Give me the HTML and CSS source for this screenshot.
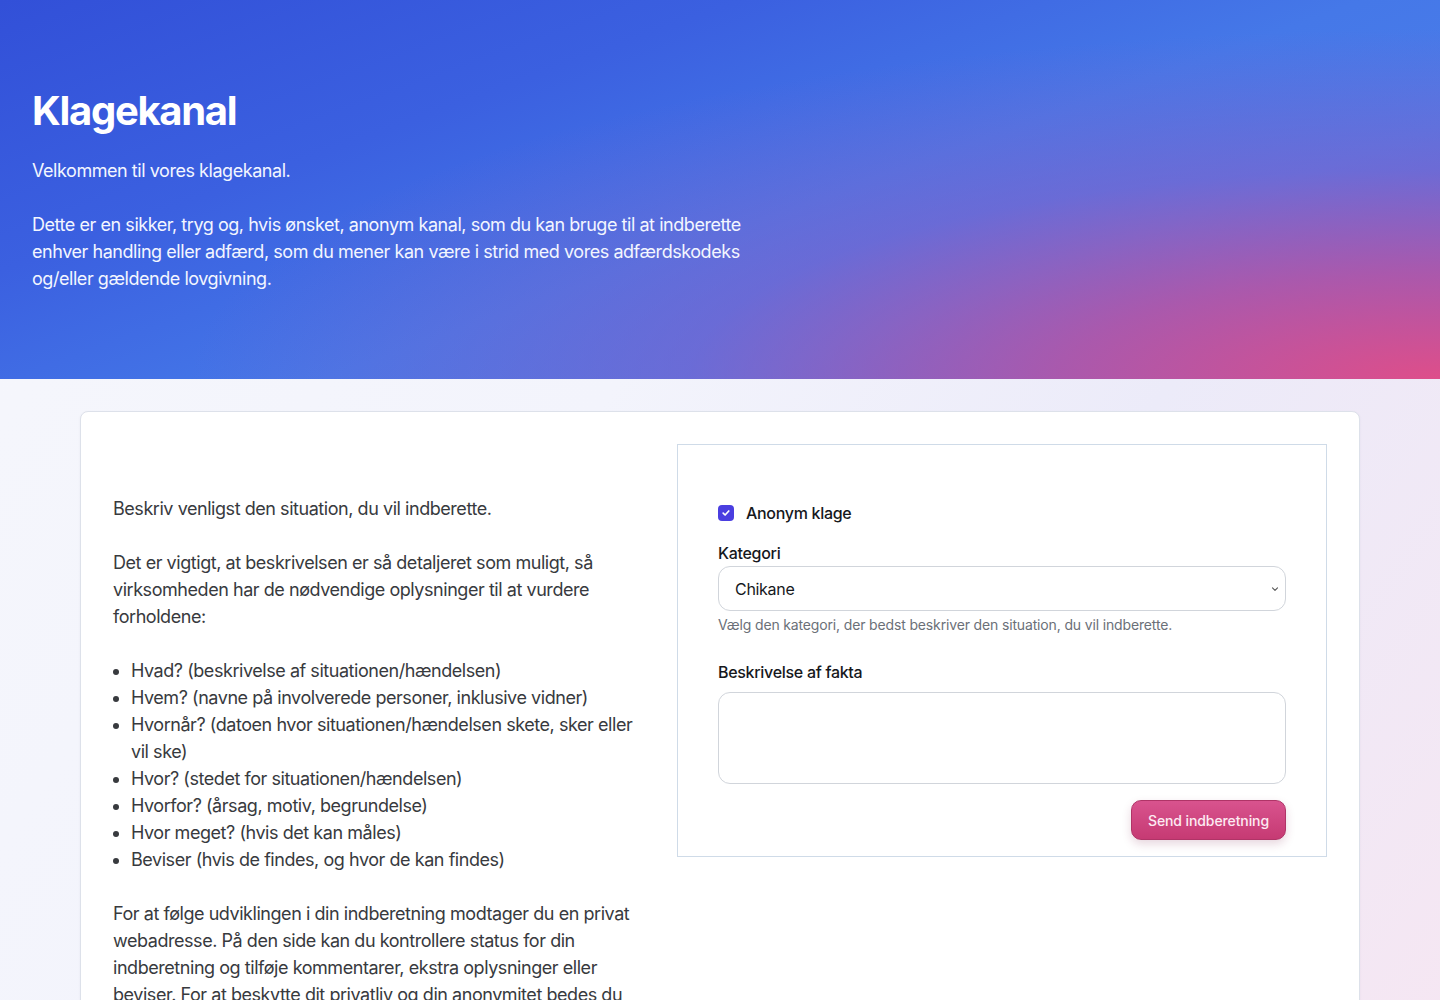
FILE: index.html
```html
<!DOCTYPE html>
<html lang="da">
<head>
<meta charset="utf-8">
<title>Klagekanal</title>
<link rel="stylesheet" href="styles.css">
</head>
<body>
<header class="hero">
  <h1 class="hero-title">Klagekanal</h1>
  <p class="hero-text">Velkommen til vores klagekanal.</p>
  <p class="hero-text">Dette er en sikker, tryg og, hvis ønsket, anonym kanal, som du kan bruge til at indberette enhver handling eller adfærd, som du mener kan være i strid med vores adfærdskodeks og/eller gældende lovgivning.</p>
</header>
<main class="page">
  <section class="card">
    <div class="intro">
      <p>Beskriv venligst den situation, du vil indberette.</p>
      <p>Det er vigtigt, at beskrivelsen er så detaljeret som muligt, så virksomheden har de nødvendige oplysninger til at vurdere forholdene:</p>
      <ul>
        <li>Hvad? (beskrivelse af situationen/hændelsen)</li>
        <li>Hvem? (navne på involverede personer, inklusive vidner)</li>
        <li>Hvornår? (datoen hvor situationen/hændelsen skete, sker eller vil ske)</li>
        <li>Hvor? (stedet for situationen/hændelsen)</li>
        <li>Hvorfor? (årsag, motiv, begrundelse)</li>
        <li>Hvor meget? (hvis det kan måles)</li>
        <li>Beviser (hvis de findes, og hvor de kan findes)</li>
      </ul>
      <p>For at følge udviklingen i din indberetning modtager du en privat webadresse. På den side kan du kontrollere status for din indberetning og tilføje kommentarer, ekstra oplysninger eller beviser. For at beskytte dit privatliv og din anonymitet bedes du gemme webadressen et sikkert sted.</p>
    </div>
    <form class="panel">
      <label class="check-row">
        <span class="check-box"><svg width="10" height="10" viewBox="0 0 10 10"><path d="M2.2 5.2 L4.1 7 L7.8 3" fill="none" stroke="#fff" stroke-width="1.7" stroke-linecap="round" stroke-linejoin="round"/></svg></span>
        <span class="check-label">Anonym klage</span>
      </label>
      <label class="field-label label-cat" for="kategori">Kategori</label>
      <div class="select-wrap">
        <select id="kategori" class="select">
          <option>Chikane</option>
        </select>
        <svg class="chevron" width="10" height="10" viewBox="0 0 10 10"><path d="M2.5 3.8 L5 6.3 L7.5 3.8" fill="none" stroke="#555" stroke-width="1.1" stroke-linecap="round" stroke-linejoin="round"/></svg>
      </div>
      <p class="help">Vælg den kategori, der bedst beskriver den situation, du vil indberette.</p>
      <label class="field-label label-desc" for="fakta">Beskrivelse af fakta</label>
      <textarea id="fakta" class="textarea"></textarea>
      <div class="actions">
        <button type="button" class="btn">Send indberetning</button>
      </div>
    </form>
  </section>
</main>
</body>
</html>
```

FILE: styles.css
```css
* { box-sizing: border-box; }

html, body {
  margin: 0;
  padding: 0;
}

body {
  font-family: Inter, "Noto Sans", "Liberation Sans", sans-serif;
  background: linear-gradient(125deg, #f6f7fc 0%, #f3f4fc 40%, #ecebf9 65%, #f6e6f2 100%);
  min-height: 1000px;
  color: #1f2328;
}

.hero {
  height: 379px;
  padding: 87px 32px 0;
  background:
    radial-gradient(ellipse 1250px 350px at 100% 100%, rgba(222, 78, 138, 1) 0%, rgba(190, 82, 160, 0.82) 30%, rgba(140, 92, 196, 0.5) 60%, rgba(110, 100, 210, 0) 100%),
    linear-gradient(160deg, #3250d8 0%, #3b60e0 30%, #4578e8 55%, #4a7ce9 72%, #5a6fdc 100%);
  color: #fff;
}

.hero-title {
  margin: 0;
  font-size: 40px;
  line-height: 48px;
  font-weight: 700;
  letter-spacing: -1.3px;
}

.hero-text {
  margin: 22px 0 0;
  max-width: 720px;
  font-size: 18px;
  line-height: 27px;
  letter-spacing: -0.45px;
  color: #f3f6ff;
}

.hero-text + .hero-text {
  margin-top: 27px;
}

.page {
  padding: 32px 80px 0;
}

.card {
  background: #fff;
  border: 1px solid #dde1ea;
  border-radius: 8px;
  box-shadow: 0 1px 3px rgba(30, 40, 80, 0.05);
  padding: 32px 32px 40px;
  display: grid;
  grid-template-columns: 532px 650px;
  column-gap: 32px;
  align-items: start;
}

.intro {
  padding-top: 51px;
  font-size: 18px;
  line-height: 27px;
  letter-spacing: -0.45px;
  color: #383a3e;
}

.intro p {
  margin: 0 0 27px;
}

.intro ul {
  margin: 0 0 27px;
  padding-left: 18px;
}

.panel {
  border: 1px solid #cfdbe8;
  padding: 56px 40px 16px;
  display: flex;
  flex-direction: column;
}

.check-row {
  display: flex;
  align-items: center;
  gap: 12px;
  height: 24px;
  font-size: 16px;
  letter-spacing: -0.3px;
  color: #16181c;
  font-weight: 500;
}

.check-box {
  width: 16px;
  height: 16px;
  border-radius: 4px;
  background: #4a3ee0;
  display: flex;
  align-items: center;
  justify-content: center;
}

.field-label {
  font-size: 16px;
  line-height: 24px;
  font-weight: 500;
  letter-spacing: -0.3px;
  color: #16181c;
}

.label-cat {
  margin-top: 16px;
}

.select-wrap {
  position: relative;
  margin-top: 1px;
}

.select {
  appearance: none;
  -webkit-appearance: none;
  width: 100%;
  height: 45px;
  border: 1px solid #d1d5db;
  border-radius: 12px;
  background: #fff;
  padding: 0 30px 0 16px;
  font-family: inherit;
  font-size: 16px;
  letter-spacing: -0.3px;
  color: #16181c;
}

.chevron {
  position: absolute;
  right: 6px;
  top: 18px;
}

.help {
  margin: 4px 0 0;
  font-size: 14px;
  line-height: 20px;
  letter-spacing: -0.15px;
  color: #6b7078;
}

.label-desc {
  margin-top: 25px;
}

.textarea {
  margin-top: 8px;
  height: 92px;
  width: 100%;
  border: 1px solid #d1d5db;
  border-radius: 12px;
  resize: none;
  font-family: inherit;
  font-size: 16px;
}

.actions {
  margin-top: 16px;
  display: flex;
  justify-content: flex-end;
}

.btn {
  height: 40px;
  padding: 0 16px;
  border: 1px solid #b03467;
  border-radius: 10px;
  background: linear-gradient(#d9538e, #c63a73);
  color: #fdeaf2;
  font-family: inherit;
  font-size: 14px;
  font-weight: 500;
  letter-spacing: -0.1px;
  box-shadow: 0 4px 10px rgba(120, 30, 70, 0.18);
}
```
